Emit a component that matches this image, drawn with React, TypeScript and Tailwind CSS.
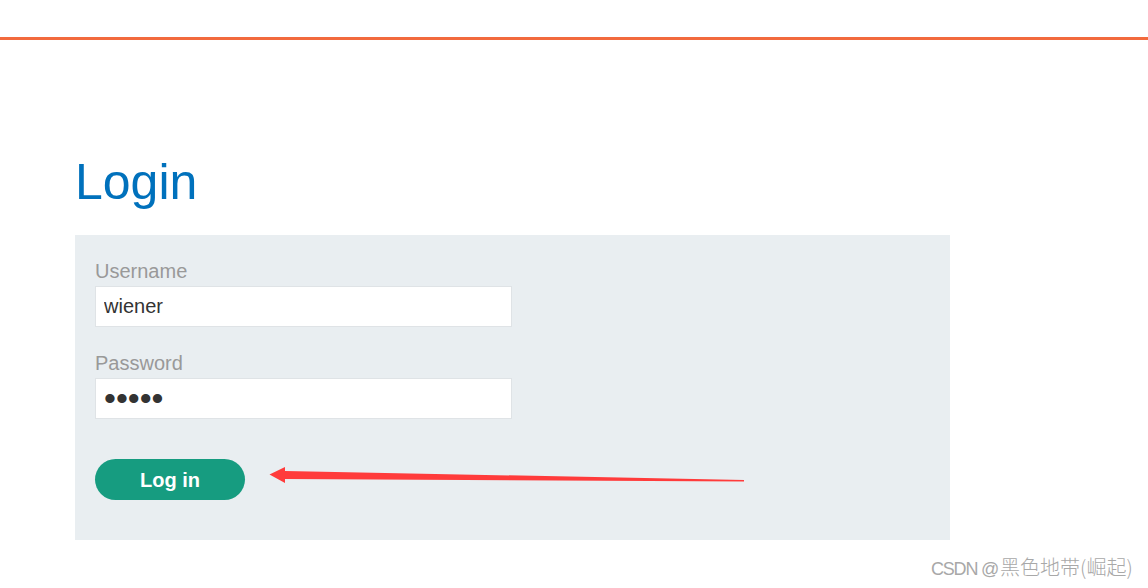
import React from 'react';

const font = { fontFamily: '"Liberation Sans", Arial, sans-serif' };

const Field: React.FC<{ label: string; type?: string; value: string; first?: boolean }> = ({ label, type = 'text', value, first }) => (
    <div className={first ? '' : 'mt-[26px]'}>
        <label className="block text-[20px] leading-none text-[#999999]">{label}</label>
        <input
            type={type}
            value={value}
            readOnly
            className={
                type === 'password'
                    ? 'mt-[5px] block h-[41px] w-[417px] border border-[#dfe3e6] bg-white px-2 py-0 text-[34px] leading-none text-[#333333] outline-none'
                    : 'mt-[5px] block h-[41px] w-[417px] border border-[#dfe3e6] bg-white px-2 text-[20px] text-[#333333] outline-none'
            }
            style={font}
        />
    </div>
);

const App: React.FC = () => {
    return (
        <div className="relative h-[588px] w-full overflow-hidden bg-white" style={font}>
            {/* top bar */}
            <div className="h-[40px] border-b-[3px] border-[#f26a3d]" />

            <div className="pl-[75px]">
                <h1 className="mt-[117px] text-[50px] leading-none text-[#0071bc]">Login</h1>

                <div className="mt-[28px] w-[875px] bg-[#e9eef1] px-5 pt-[26px] pb-10">
                    <Field label="Username" value="wiener" first />
                    <Field label="Password" type="password" value="peter" />
                    <button className="mt-10 h-[41px] w-[150px] rounded-full bg-[#169c80] text-[20px] font-bold text-white">
                        Log in
                    </button>
                </div>
            </div>

            {/* annotation arrow */}
            <svg className="pointer-events-none absolute left-0 top-0" width="1148" height="588">
                <path d="M269.5 474.5 L285 467 L285 471 L744 480 L744 481.5 L285 479 L285 483 Z" fill="#ff3b3b" />
            </svg>

            {/* watermark */}
            <div
                className="absolute left-[931px] top-[557px] whitespace-nowrap text-[20px] leading-none text-[#a8a8a8]"
                style={{ fontFamily: '"Liberation Sans", "Noto Sans CJK SC", sans-serif' }}
            >
                <span className="text-[18px] tracking-[-1.2px]">CSDN @</span>
                <span className="ml-[2px] font-light" style={{ fontFamily: '"Noto Sans CJK SC", sans-serif' }}>黑色地带(崛起)</span>
            </div>
        </div>
    );
};

export default App;
